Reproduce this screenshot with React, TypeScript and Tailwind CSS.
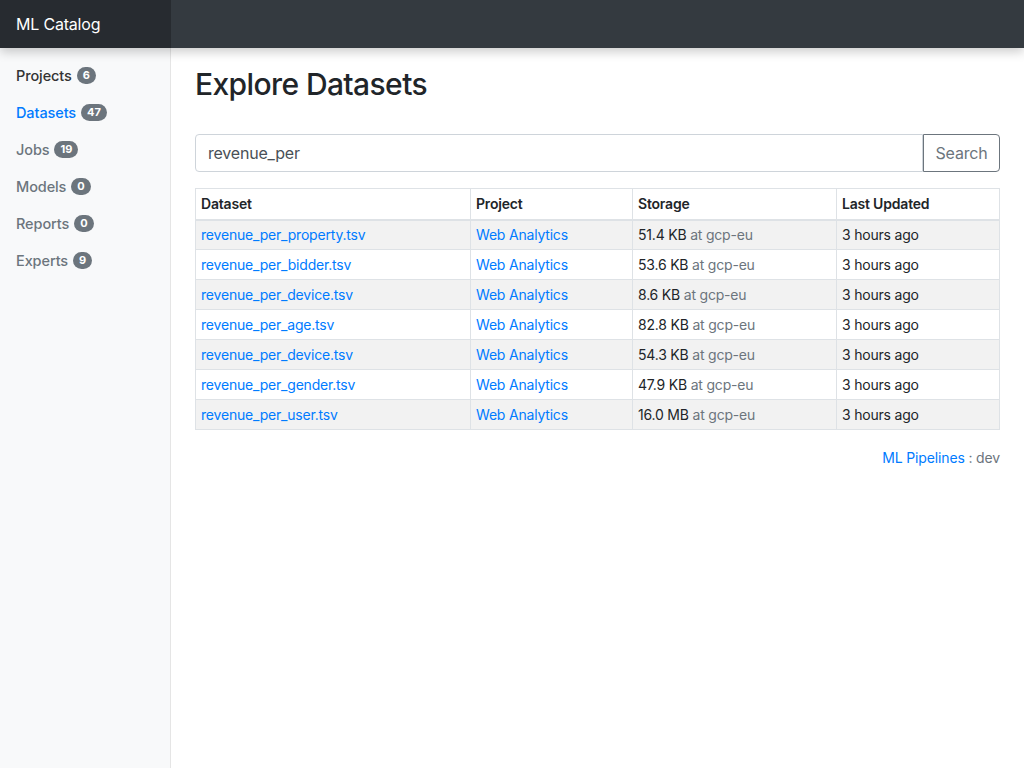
const rows = [
  { name: "revenue_per_property.tsv", size: "51.4 KB" },
  { name: "revenue_per_bidder.tsv", size: "53.6 KB" },
  { name: "revenue_per_device.tsv", size: "8.6 KB" },
  { name: "revenue_per_age.tsv", size: "82.8 KB" },
  { name: "revenue_per_device.tsv", size: "54.3 KB" },
  { name: "revenue_per_gender.tsv", size: "47.9 KB" },
  { name: "revenue_per_user.tsv", size: "16.0 MB" },
];

const nav = [
  { label: "Projects", count: 6, active: false, dark: true },
  { label: "Datasets", count: 47, active: true, dark: false },
  { label: "Jobs", count: 19, active: false, dark: false },
  { label: "Models", count: 0, active: false, dark: false },
  { label: "Reports", count: 0, active: false, dark: false },
  { label: "Experts", count: 9, active: false, dark: false },
];

export default function App() {
  return (
    <div className="min-h-[768px] flex flex-col bg-white text-[#212529] font-['Inter',sans-serif]">
      <header className="h-12 flex bg-[#343a40] shadow-[0_4px_10px_rgba(0,0,0,0.2)] relative z-10">
        <div className="w-[171px] bg-[#272b30] flex items-center px-4 text-white text-[16px] tracking-[-0.2px]">
          ML Catalog
        </div>
      </header>
      <div className="flex flex-1">
        <aside className="w-[171px] min-h-[720px] bg-[#f8f9fa] border-r border-[#e5e5e5] pt-[9px]">
          {nav.map((n) => (
            <div
              key={n.label}
              className={
                "h-[37px] flex items-center px-4 text-[14.5px] font-medium tracking-[-0.1px] " +
                (n.active ? "text-[#007bff]" : n.dark ? "text-[#333]" : "text-[#6c757d]")
              }
            >
              {n.label}
              <span className="ml-[5px] rounded-full bg-[#6c757d] text-white text-[11px] font-bold leading-none px-[6px] py-[3px]">
                {n.count}
              </span>
            </div>
          ))}
        </aside>
        <main className="flex-1 px-6 pt-[21px]">
          <h1 className="text-[30px] font-medium leading-none mb-[35px] tracking-[-0.6px]">Explore Datasets</h1>
          <div className="flex h-[38px] mb-4">
            <div className="flex-1 border border-[#ced4da] rounded-l-[4px] flex items-center px-3 text-[16px] text-[#495057] tracking-[-0.2px]">
              revenue_per
            </div>
            <div className="w-[77px] border border-[#6c757d] rounded-r-[4px] flex items-center justify-center text-[16px] text-[#6c757d] tracking-[-0.2px]">
              Search
            </div>
          </div>
          <table className="w-full border-collapse border border-[#dee2e6] text-[14px] tracking-[-0.2px]">
            <thead>
              <tr className="h-[31px] border-b-2 border-[#dee2e6] text-left">
                <th className="w-[275px] border border-[#dee2e6] px-[5px] font-semibold">Dataset</th>
                <th className="w-[162px] border border-[#dee2e6] px-[5px] font-semibold">Project</th>
                <th className="w-[204px] border border-[#dee2e6] px-[5px] font-semibold">Storage</th>
                <th className="border border-[#dee2e6] px-[5px] font-semibold">Last Updated</th>
              </tr>
            </thead>
            <tbody>
              {rows.map((r, i) => (
                <tr key={i} className={"h-[30px] " + (i % 2 === 0 ? "bg-[#f2f2f2]" : "bg-white")}>
                  <td className="border border-[#dee2e6] px-[5px] text-[#007bff]">{r.name}</td>
                  <td className="border border-[#dee2e6] px-[5px] text-[#007bff]">Web Analytics</td>
                  <td className="border border-[#dee2e6] px-[5px]">
                    {r.size} <span className="text-[#6c757d]">at gcp-eu</span>
                  </td>
                  <td className="border border-[#dee2e6] px-[5px]">3 hours ago</td>
                </tr>
              ))}
            </tbody>
          </table>
          <div className="text-right mt-[17px] text-[14px] tracking-[-0.15px] text-[#6c757d]">
            <span className="text-[#007bff]">ML Pipelines</span> : dev
          </div>
        </main>
      </div>
    </div>
  );
}
